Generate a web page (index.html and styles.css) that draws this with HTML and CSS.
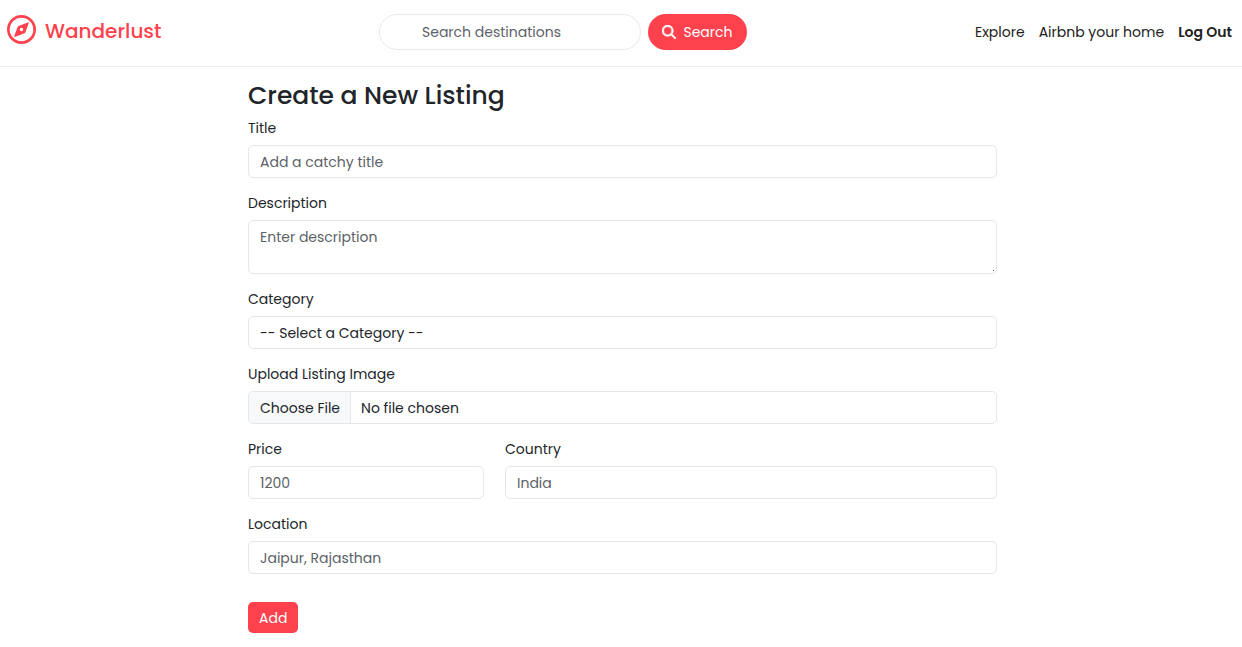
FILE: index.html
```html
<!DOCTYPE html>
<html lang="en">
<head>
  <meta charset="utf-8">
  <meta name="viewport" content="width=device-width, initial-scale=1">
  <title>Wanderlust</title>
  <link rel="stylesheet" href="styles.css">
</head>
<body>
  <header class="navbar">
    <a class="brand" href="#">
      <svg class="brand-icon" viewBox="0 0 28 28" aria-hidden="true">
        <circle cx="14" cy="14" r="12.7" fill="none" stroke="currentColor" stroke-width="2.6"/>
        <path fill="currentColor" fill-rule="evenodd" d="M20 7.300 11.200 10.500a1.600 1.600 0 0 0-.9.9L7.100 20c-.2.700.3 1.200 1 .9l8.700-3.200a1.600 1.600 0 0 0 .9-.9L20.900 8.200c.2-.700-.2-1.100-.9-.9zM14 12.400a1.700 1.700 0 1 1 0 3.400 1.700 1.700 0 0 1 0-3.400z"/>
      </svg>
      <span class="brand-name">Wanderlust</span>
    </a>
    <form class="search" role="search">
      <input class="search-input" type="search" placeholder="Search destinations" aria-label="Search destinations">
      <button class="search-button" type="button">
        <svg class="search-icon" viewBox="0 0 512 512" aria-hidden="true">
          <path fill="currentColor" stroke="currentColor" stroke-width="14" d="M416 208c0 45.900-14.900 88.300-40 122.700L502.600 457.400c12.500 12.500 12.500 32.800 0 45.300s-32.800 12.500-45.300 0L330.700 376c-34.400 25.200-76.800 40-122.700 40C93.100 416 0 322.900 0 208S93.100 0 208 0S416 93.100 416 208zM208 352a144 144 0 1 0 0-288 144 144 0 1 0 0 288z"/>
        </svg>
        Search
      </button>
    </form>
    <nav class="links">
      <a class="link" href="#">Explore</a>
      <a class="link" href="#">Airbnb your home</a>
      <a class="link link-strong" href="#">Log Out</a>
    </nav>
  </header>

  <main class="page">
    <form class="listing">
      <h1 class="heading">Create a New Listing</h1>
      <div class="field">
        <label class="label" for="title">Title</label>
        <input class="control" id="title" type="text" placeholder="Add a catchy title">
      </div>
      <div class="field">
        <label class="label" for="description">Description</label>
        <textarea class="control control-area" id="description" placeholder="Enter description"></textarea>
      </div>
      <div class="field">
        <label class="label" for="category">Category</label>
        <select class="control" id="category">
          <option>-- Select a Category --</option>
        </select>
      </div>
      <div class="field">
        <label class="label" for="image">Upload Listing Image</label>
        <input class="control control-file" id="image" type="file">
      </div>
      <div class="row">
        <div class="field">
          <label class="label" for="price">Price</label>
          <input class="control" id="price" type="text" inputmode="numeric" placeholder="1200">
        </div>
        <div class="field">
          <label class="label" for="country">Country</label>
          <input class="control" id="country" type="text" placeholder="India">
        </div>
      </div>
      <div class="field">
        <label class="label" for="location">Location</label>
        <input class="control" id="location" type="text" placeholder="Jaipur, Rajasthan">
      </div>
      <button class="submit" type="button">Add</button>
    </form>
  </main>
</body>
</html>
```
FILE: styles.css
```css
* {
  box-sizing: border-box;
}

body {
  margin: 0;
  background: #fff;
  color: #212529;
  font-family: Poppins, Inter, "Open Sans", sans-serif;
  font-size: 14px;
  line-height: 21px;
}

input,
textarea,
select,
button {
  margin: 0;
  font: inherit;
  color: inherit;
}

::placeholder {
  color: #5c6268;
  opacity: 1;
}

.navbar {
  display: grid;
  grid-template-columns: 372fr auto 485fr;
  align-items: center;
  padding: 14px 10px 16px 7px;
  border-bottom: 1px solid #ebebeb;
}

.brand {
  display: flex;
  align-items: center;
  gap: 9px;
  color: #fe424d;
  text-decoration: none;
}

.brand-icon {
  width: 29px;
  height: 29px;
  margin-bottom: 5px;
}

.brand-name {
  margin-bottom: 2px;
  font-size: 20px;
  font-weight: 500;
  line-height: 32px;
}

.search {
  display: flex;
  gap: 7px;
}

.search-input {
  width: 262px;
  height: 36px;
  padding: 0 42px;
  border: 1px solid #e6e8ea;
  border-radius: 18px;
  background: #fff;
}

.search-button {
  display: flex;
  align-items: center;
  justify-content: center;
  gap: 7px;
  width: 99px;
  height: 36px;
  padding: 0;
  border: 0;
  border-radius: 18px;
  background: #fe424d;
  color: #fff;
}

.search-icon {
  width: 14px;
  height: 14px;
}

.links {
  display: flex;
  justify-content: flex-end;
  gap: 14px;
}

.link {
  color: #222;
  text-decoration: none;
  white-space: nowrap;
}

.link-strong {
  font-weight: 600;
}

.page {
  display: grid;
  grid-template-columns: 248fr 749fr 245fr;
  padding: 14px 0;
}

.listing {
  grid-column: 2;
}

.heading {
  margin: 0 0 7px;
  font-size: 25px;
  font-weight: 500;
  line-height: 30px;
}

.field {
  display: flex;
  flex-direction: column;
  gap: 6px;
  margin-bottom: 15px;
}

.label {
  align-self: flex-start;
}

.control {
  width: 100%;
  height: 33px;
  padding: 6px 11px 4px;
  border: 1px solid #e3e6ea;
  border-radius: 5px;
  background: #fff;
  appearance: none;
}

.control-area {
  display: block;
  height: 54px;
  resize: vertical;
}

.control-area::-webkit-resizer {
  background: linear-gradient(#555, #555) no-repeat right 2px bottom 2px / 1px 1px;
}

.control-file {
  padding: 0;
  line-height: 33px;
  overflow: hidden;
}

.control-file::file-selector-button {
  height: 33px;
  margin: 0 10px 0 0;
  padding: 0 10px 0 11px;
  border: 0;
  border-right: 1px solid #e3e6ea;
  background: #f8f9fa;
  color: inherit;
  font: inherit;
}

.row {
  display: grid;
  grid-template-columns: 236fr 492fr;
  gap: 21px;
}

.submit {
  height: 31px;
  margin-top: 13px;
  padding: 1px 11px 0;
  border: 0;
  border-radius: 5px;
  background: #fe424d;
  color: #fff;
}
```
